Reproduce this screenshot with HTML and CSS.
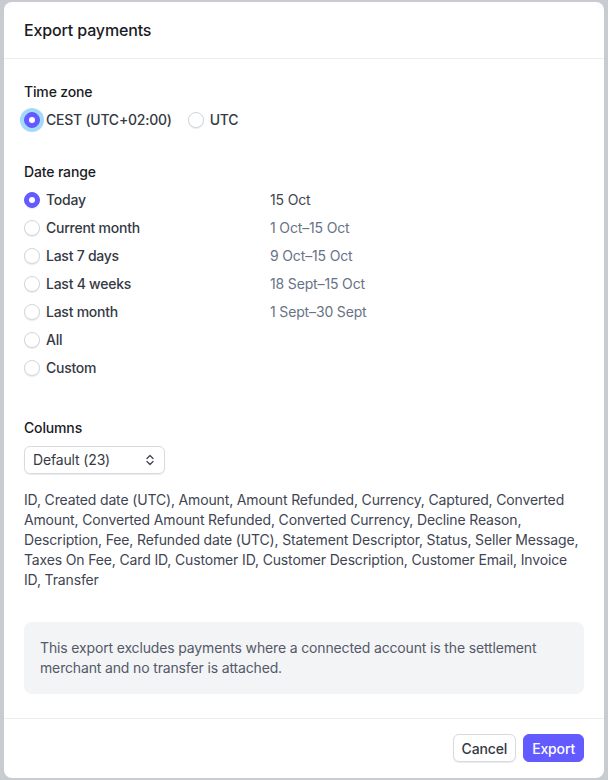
FILE: index.html
```html
<!DOCTYPE html>
<html lang="en">
<head>
  <meta charset="UTF-8" />
  <meta name="viewport" content="width=device-width, initial-scale=1.0" />
  <title>Export payments</title>
  <link rel="stylesheet" href="styles.css">
</head>
<body>
  <div class="modal">
    <div class="modal-header">Export payments</div>

    <div class="modal-body">
      <div class="field">
        <div class="field-label">Time zone</div>
        <div class="inline-options">
          <label class="radio"><span class="dot checked focus"></span>CEST (UTC+02:00)</label>
          <label class="radio"><span class="dot"></span>UTC</label>
        </div>
      </div>

      <div class="field">
        <div class="field-label">Date range</div>
        <div class="range-list">
          <label class="radio"><span class="dot checked"></span>Today</label>
          <span class="range-date current">15 Oct</span>
          <label class="radio"><span class="dot"></span>Current month</label>
          <span class="range-date">1 Oct–15 Oct</span>
          <label class="radio"><span class="dot"></span>Last 7 days</label>
          <span class="range-date">9 Oct–15 Oct</span>
          <label class="radio"><span class="dot"></span>Last 4 weeks</label>
          <span class="range-date">18 Sept–15 Oct</span>
          <label class="radio"><span class="dot"></span>Last month</label>
          <span class="range-date">1 Sept–30 Sept</span>
          <label class="radio"><span class="dot"></span>All</label>
          <span class="range-date"></span>
          <label class="radio"><span class="dot"></span>Custom</label>
          <span class="range-date"></span>
        </div>
      </div>

      <div class="field columns">
        <div class="field-label">Columns</div>
        <div class="select">
          <span>Default (23)</span>
          <svg width="12" height="12" viewBox="0 0 12 12" fill="none" stroke="#414552" stroke-width="1.3" stroke-linecap="round" stroke-linejoin="round">
            <path d="M3 4.5L6 1.5L9 4.5" />
            <path d="M3 7.5L6 10.5L9 7.5" />
          </svg>
        </div>
        <p class="column-list">ID, Created date (UTC), Amount, Amount Refunded, Currency, Captured, Converted Amount, Converted Amount Refunded, Converted Currency, Decline Reason, Description, Fee, Refunded date (UTC), Statement Descriptor, Status, Seller Message, Taxes On Fee, Card ID, Customer ID, Customer Description, Customer Email, Invoice ID, Transfer</p>
      </div>

      <div class="notice">This export excludes payments where a connected account is the settlement merchant and no transfer is attached.</div>
    </div>

    <div class="modal-footer">
      <button class="btn btn-secondary">Cancel</button>
      <button class="btn btn-primary">Export</button>
    </div>
  </div>
</body>
</html>
```

FILE: styles.css
```css
* {
  margin: 0;
  padding: 0;
  box-sizing: border-box;
}
body {
  background-color: #c8cbd0;
  font-family: Inter, "Noto Sans", sans-serif;
  font-size: 14px;
  line-height: 20px;
  letter-spacing: -0.15px;
  color: #353a44;
  padding: 2px 4px;
  height: 780px;
  overflow: hidden;
}
.modal {
  width: 600px;
  height: 776px;
  background: #fff;
  border-radius: 8px;
  display: flex;
  flex-direction: column;
}
.modal-header {
  padding: 16px 20px;
  font-size: 16px;
  line-height: 24px;
  font-weight: 500;
  color: #1a1b25;
  border-bottom: 1px solid #ebeef1;
}
.modal-body {
  flex: 1;
  padding: 23px 20px 24px;
  display: flex;
  flex-direction: column;
  gap: 32px;
}
.field {
  display: flex;
  flex-direction: column;
  gap: 8px;
}
.field.columns {
  margin-top: 8px;
}
.field-label {
  font-weight: 500;
  color: #1a1b25;
}
.inline-options {
  display: flex;
  gap: 16px;
}
.radio {
  display: flex;
  align-items: center;
  gap: 6px;
  color: #353a44;
  font-weight: 500;
  letter-spacing: -0.25px;
}
.dot {
  width: 16px;
  height: 16px;
  border-radius: 50%;
  border: 1px solid #d0d6dd;
  background: #fff;
  box-shadow: 0 1px 1px rgba(0, 0, 0, 0.08);
  flex-shrink: 0;
  display: flex;
  align-items: center;
  justify-content: center;
}
.dot.checked {
  background: #635bff;
  border-color: #635bff;
}
.dot.checked::after {
  content: "";
  width: 6px;
  height: 6px;
  border-radius: 50%;
  background: #fff;
}
.dot.focus {
  box-shadow: 0 0 0 4px rgba(1, 150, 237, 0.36);
}
.range-list {
  display: grid;
  grid-template-columns: 246px 1fr;
  row-gap: 8px;
}
.range-date {
  color: #687385;
}
.range-date.current {
  color: #414552;
}
.select {
  width: 141px;
  height: 28px;
  padding: 0 8px;
  display: flex;
  align-items: center;
  justify-content: space-between;
  border: 1px solid #d5dbe1;
  border-radius: 6px;
  box-shadow: 0 1px 1px rgba(0, 0, 0, 0.08);
  color: #353a44;
}
.column-list {
  margin-top: 8px;
  color: #414552;
}
.notice {
  background: #f3f4f6;
  border-radius: 8px;
  padding: 16px;
  color: #545969;
}
.modal-footer {
  border-top: 1px solid #ebeef1;
  padding: 15px 20px 16px;
  display: flex;
  justify-content: flex-end;
  gap: 7px;
}
.btn {
  font-family: inherit;
  font-size: 14px;
  letter-spacing: -0.15px;
  font-weight: 500;
  height: 28px;
  padding: 0 8px;
  border-radius: 6px;
  cursor: pointer;
}
.btn-secondary {
  background: #fff;
  border: 1px solid #d5dbe1;
  color: #353a44;
  box-shadow: 0 1px 1px rgba(0, 0, 0, 0.08);
}
.btn-primary {
  background: #635bff;
  border: 1px solid #635bff;
  color: #fff;
}
```
